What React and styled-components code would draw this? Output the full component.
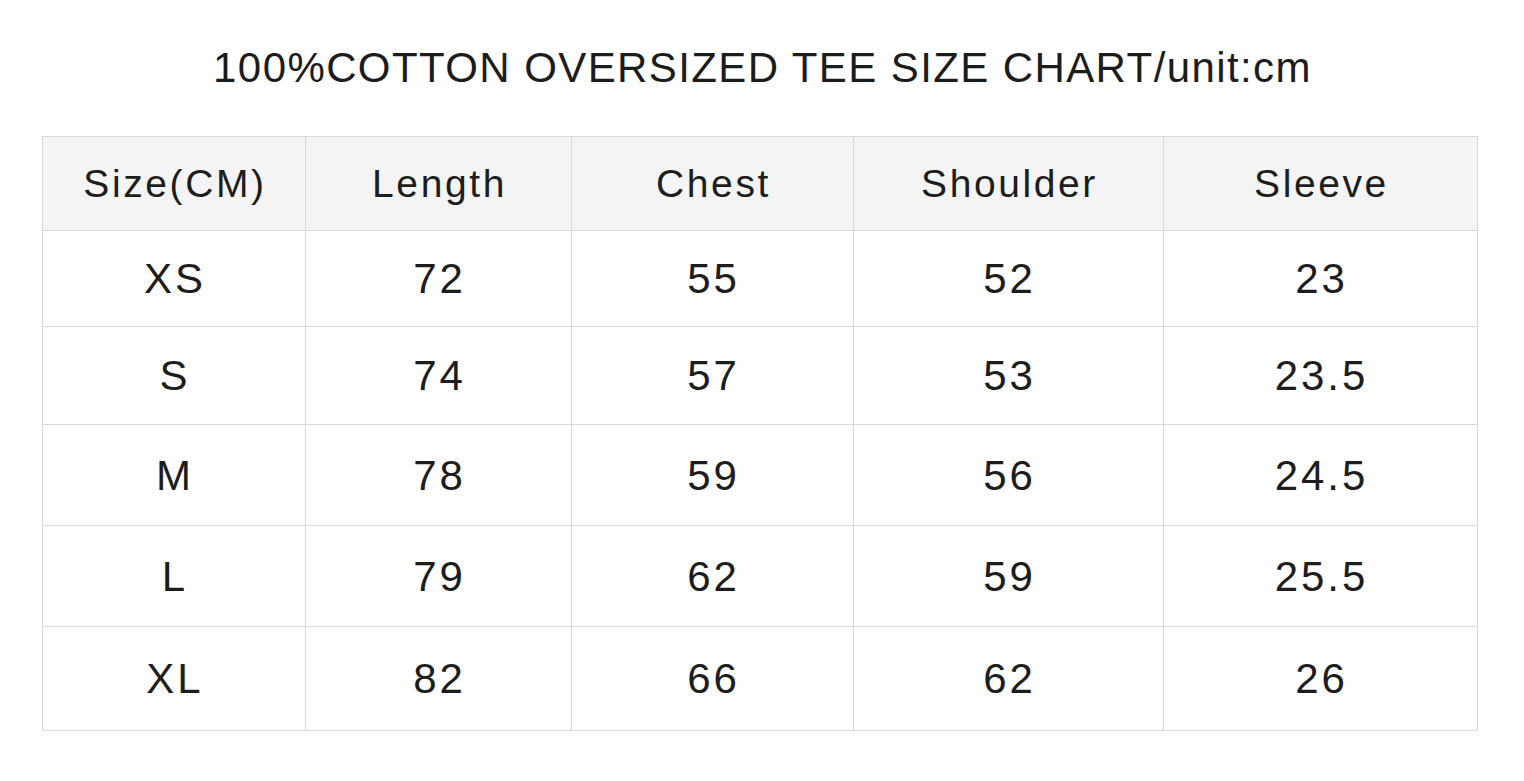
import React from 'react';
import styled, { createGlobalStyle } from 'styled-components';

const GlobalStyle = createGlobalStyle`
    html, body {
        margin: 0;
        padding: 0;
        background: #ffffff;
    }
    body {
        font-family: 'Liberation Sans', Arial, sans-serif;
        color: #1a1a1a;
    }
`;

const Page = styled.div`
    width: 1524px;
    height: 781px;
    box-sizing: border-box;
    padding: 40px 47px 0 42px;
    display: flex;
    flex-direction: column;
    align-items: center;
`;

const Title = styled.h1`
    margin: 0 0 24px 0;
    height: 72px;
    line-height: 56px;
    font-size: 42px;
    font-weight: 400;
    letter-spacing: 1.4px;
    color: #1c1c1c;
    white-space: nowrap;
    padding-left: 6px;
`;

const Table = styled.div`
    width: 100%;
    display: grid;
    grid-template-columns: 263px 266px 282px 310px 1fr;
    grid-template-rows: 94px 96px 98px 101px 101px 104px;
    border-top: 1px solid #d9d9d9;
    border-left: 1px solid #d9d9d9;
`;

const Cell = styled.div`
    display: flex;
    align-items: center;
    justify-content: center;
    border-right: 1px solid #d9d9d9;
    border-bottom: 1px solid #d9d9d9;
    background: ${p => (p.$head ? '#f4f4f4' : '#ffffff')};
    font-size: ${p => (p.$head ? '39px' : '42px')};
    letter-spacing: ${p => (p.$head ? '2.6px' : '3px')};
    color: #1d1d1d;
    padding-top: ${p => (p.$head ? '0' : '1px')};
    padding-left: 3px;
`;

const headers = ['Size(CM)', 'Length', 'Chest', 'Shoulder', 'Sleeve'];

const rows = [
    ['XS', '72', '55', '52', '23'],
    ['S', '74', '57', '53', '23.5'],
    ['M', '78', '59', '56', '24.5'],
    ['L', '79', '62', '59', '25.5'],
    ['XL', '82', '66', '62', '26']
];

const App = () => {
    return (
        <>
            <GlobalStyle />
            <Page>
                <Title>100%COTTON OVERSIZED TEE SIZE CHART/unit:cm</Title>
                <Table>
                    {headers.map(h => (
                        <Cell key={h} $head>
                            {h}
                        </Cell>
                    ))}
                    {rows.map(row =>
                        row.map((v, i) => <Cell key={row[0] + i}>{v}</Cell>)
                    )}
                </Table>
            </Page>
        </>
    );
};

export default App;
